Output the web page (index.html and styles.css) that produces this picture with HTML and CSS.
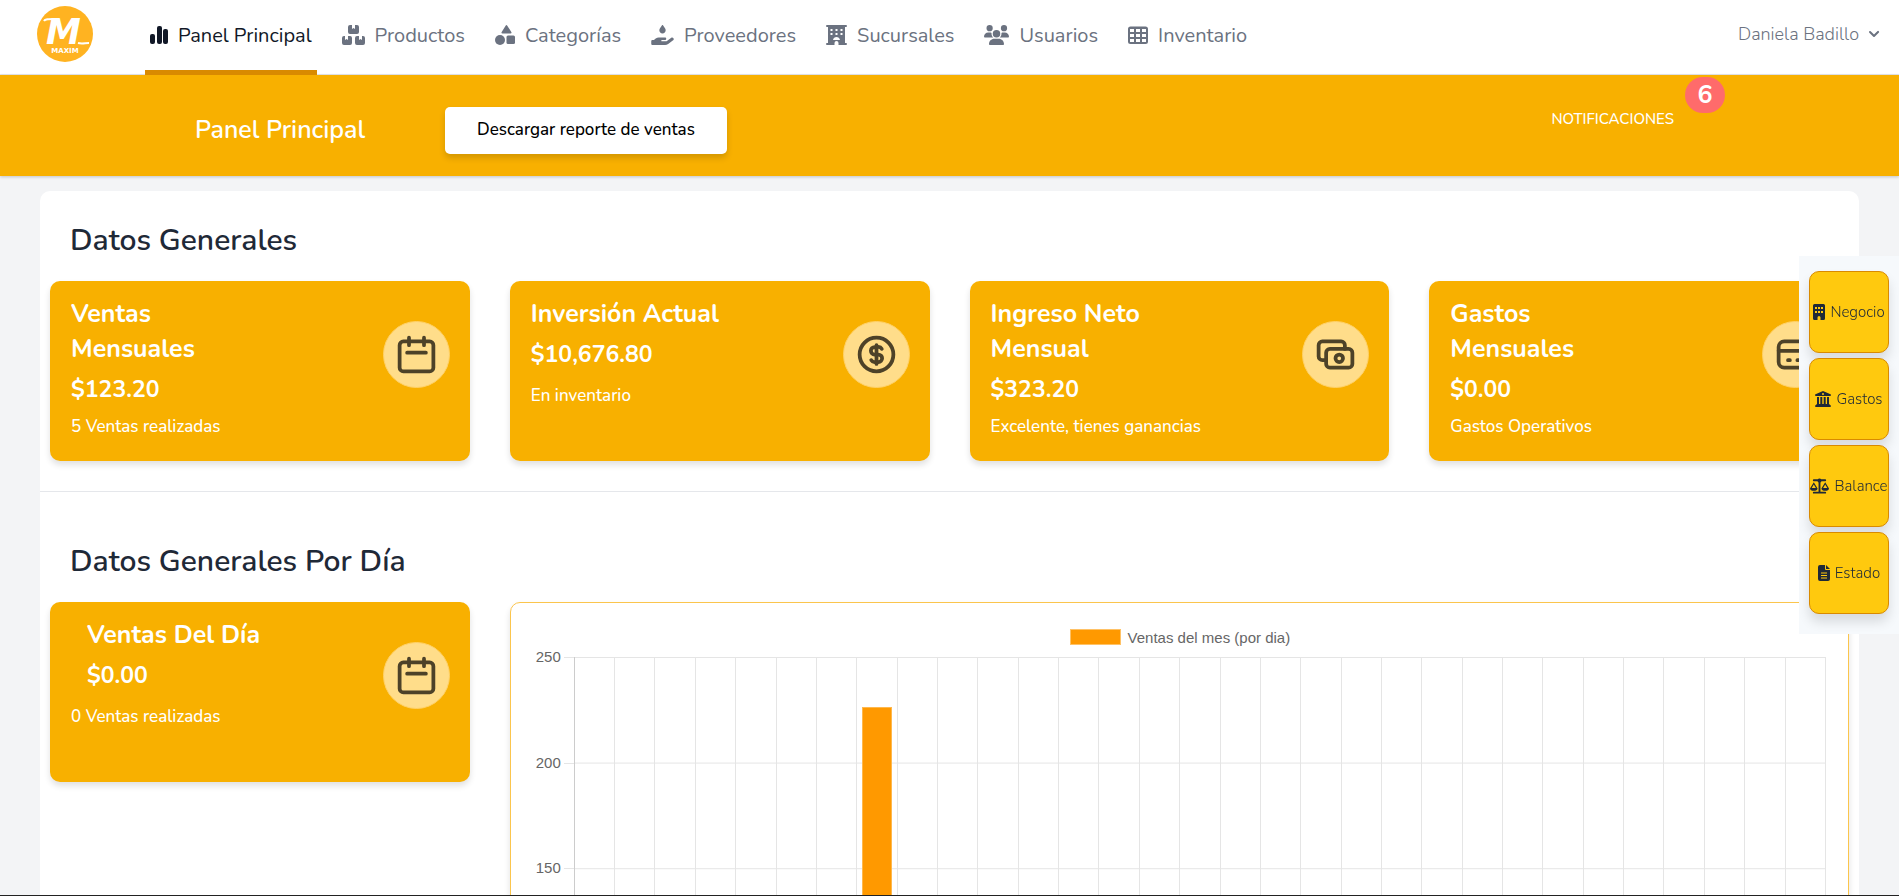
FILE: index.html
```html
<!DOCTYPE html>
<html lang="es">
<head>
    <meta charset="UTF-8">
    <meta name="viewport" content="width=device-width, initial-scale=1">
    <title>Panel Principal</title>
    <link rel="stylesheet" href="styles.css">
</head>
<body>
    <nav class="navbar">
        <a class="logo" href="#" aria-label="Maxim">
            <svg viewBox="0 0 56 56">
                <circle cx="28" cy="28" r="28" fill="#ffb321"/>
                <path d="M7 15c1-2 4-2 11-2M41 37c4 1 7 0 11 0" fill="none" stroke="#fff" stroke-width="2"/>
                <text class="logo-m" x="9" y="38">M</text>
                <text class="logo-name" x="28" y="47" text-anchor="middle">MAXIM</text>
            </svg>
        </a>
        <div class="nav-links">
            <a class="nav-link active" href="#">
                <svg width="18" height="20" viewBox="0 0 18 20">
                    <rect x="0" y="9" width="5" height="10" rx="2"/>
                    <rect x="7" y="1" width="5" height="18" rx="2"/>
                    <rect x="13" y="4" width="5" height="15" rx="2"/>
                </svg>
                Panel Principal
            </a>
            <a class="nav-link" href="#">
                <svg width="23" height="20" viewBox="0 0 23 20">
                    <path d="M8 0h2v4l1.500-1 1.500 1V0h2a2 2 0 0 1 2 2v5a2 2 0 0 1-2 2H8a2 2 0 0 1-2-2V2a2 2 0 0 1 2-2z"/>
                    <path d="M2 11h1v4l1.500-1 1.500 1v-4h2a2 2 0 0 1 2 2v5a2 2 0 0 1-2 2H2a2 2 0 0 1-2-2v-5a2 2 0 0 1 2-2z"/>
                    <path d="M15 11h2v4l1.500-1 1.500 1v-4h1a2 2 0 0 1 2 2v5a2 2 0 0 1-2 2h-6a2 2 0 0 1-2-2v-5a2 2 0 0 1 2-2z"/>
                </svg>
                Productos
            </a>
            <a class="nav-link" href="#">
                <svg width="20" height="20" viewBox="0 0 20 20">
                    <path d="M10.600.700a1 1 0 0 1 1.700 0l4 6.300a1 1 0 0 1-.800 1.500H7.500a1 1 0 0 1-.800-1.500z"/>
                    <circle cx="5" cy="15" r="5"/>
                    <rect x="11.500" y="10.500" width="8.500" height="8.500" rx="1.500"/>
                </svg>
                Categorías
            </a>
            <a class="nav-link" href="#">
                <svg width="23" height="20" viewBox="0 0 576 512">
                    <path d="M275.500 6.600C278.300 2.500 283 0 288 0s9.700 2.500 12.500 6.600L352 85c11.200 16.200 17.200 30 17.200 50v1.700c0 46-36 83-81.200 83s-81.200-37-81.200-83v-1.700c0-19.700 6-34 17.200-50zM568.200 336.300c13.100 17.800 9.300 42.800-8.500 55.900L433.100 485.500c-23.400 17.200-51.600 26.500-80.700 26.500H32c-17.700 0-32-14.300-32-32v-64c0-17.700 14.300-32 32-32h36.800l44.900-36c22.700-18.200 50.900-28 80-28H352c17.700 0 32 14.300 32 32s-14.300 32-32 32h-80c-8.800 0-16 7.200-16 16s7.200 16 16 16h120.600l119.700-88.200c17.800-13.100 42.800-9.300 55.900 8.500z"/>
                </svg>
                Proveedores
            </a>
            <a class="nav-link" href="#">
                <svg width="21" height="20" viewBox="0 0 21 20">
                    <path fill-rule="evenodd" d="M1 0h19a1 1 0 0 1 0 2h-1v16h1a1 1 0 0 1 0 2h-7.500v-2a2 2 0 0 0-4 0v2H1a1 1 0 0 1 0-2h1V2H1a1 1 0 0 1 0-2zM4.500 4v2h2V4zM9.500 4v2h2V4zM14.500 4v2h2V4zM4.500 8v2h2V8zM9.500 8v2h2V8zM14.500 8v2h2V8zM7 15h7c-.300-2-1.800-3-3.500-3S7.300 13 7 15z"/>
                </svg>
                Sucursales
            </a>
            <a class="nav-link" href="#">
                <svg width="25" height="20" viewBox="0 0 640 512">
                    <path d="M144 0a80 80 0 1 1 0 160A80 80 0 1 1 144 0zM512 0a80 80 0 1 1 0 160A80 80 0 1 1 512 0zM0 298.700C0 239.800 47.800 192 106.700 192h42.700c15.900 0 31 3.500 44.600 9.700-1.300 7.200-1.900 14.700-1.900 22.300 0 38.200 16.800 72.500 43.300 96H21.300C9.600 320 0 310.400 0 298.700zM405.300 320h-.700c26.600-23.500 43.300-57.800 43.300-96 0-7.600-.700-15-1.900-22.300 13.600-6.300 28.700-9.700 44.600-9.700h42.700C592.200 192 640 239.800 640 298.700c0 11.800-9.600 21.300-21.300 21.300zM224 224a96 96 0 1 1 192 0 96 96 0 1 1-192 0zM128 485.300C128 411.700 187.700 352 261.300 352h117.300C452.300 352 512 411.700 512 485.300c0 14.700-11.900 26.700-26.700 26.700H154.700c-14.700 0-26.700-11.900-26.700-26.700z"/>
                </svg>
                Usuarios
            </a>
            <a class="nav-link" href="#">
                <svg width="20" height="20" viewBox="0 0 20 20">
                    <path fill-rule="evenodd" d="M2.500 1.500h15A2.500 2.500 0 0 1 20 4v12.500a2.500 2.500 0 0 1-2.500 2.500h-15A2.500 2.500 0 0 1 0 16.500V4a2.500 2.500 0 0 1 2.500-2.500zM2 4v3h4V4zM8 4v3h4V4zM14 4v3h4V4zM2 9v3h4V9zM8 9v3h4V9zM14 9v3h4V9zM2 14v3h4v-3zM8 14v3h4v-3zM14 14v3h4v-3z"/>
                </svg>
                Inventario
            </a>
        </div>
        <button class="user-menu" type="button">
            Daniela Badillo
            <svg width="20" height="20" viewBox="0 0 20 20">
                <path fill-rule="evenodd" d="M5.300 7.300a1 1 0 0 1 1.400 0L10 10.600l3.300-3.300a1 1 0 1 1 1.400 1.400l-4 4a1 1 0 0 1-1.400 0l-4-4a1 1 0 0 1 0-1.400z"/>
            </svg>
        </button>
    </nav>

    <header class="page-header">
        <h1>Panel Principal</h1>
        <button class="download" type="button">Descargar reporte de ventas</button>
        <a class="notifications" href="#">NOTIFICACIONES <span class="badge">6</span></a>
    </header>

    <main class="panel">
        <section class="section">
            <h2>Datos Generales</h2>
            <div class="cards">
                <article class="card">
                    <div class="card-text">
                        <h3>Ventas Mensuales</h3>
                        <p class="amount">$123.20</p>
                        <p class="detail">5 Ventas realizadas</p>
                    </div>
                    <span class="card-icon">
                        <svg viewBox="0 0 24 24">
                            <rect x="3" y="5" width="18" height="16" rx="2"/>
                            <path d="M8 3v4M16 3v4M7 11h10"/>
                        </svg>
                    </span>
                </article>
                <article class="card short">
                    <div class="card-text">
                        <h3>Inversión Actual</h3>
                        <p class="amount">$10,676.80</p>
                        <p class="detail">En inventario</p>
                    </div>
                    <span class="card-icon">
                        <svg viewBox="0 0 24 24">
                            <circle cx="12" cy="12" r="9"/>
                            <path d="M14.800 9A2 2 0 0 0 13 8h-2a2 2 0 1 0 0 4h2a2 2 0 1 1 0 4h-2a2 2 0 0 1-1.800-1M12 7v10"/>
                        </svg>
                    </span>
                </article>
                <article class="card">
                    <div class="card-text">
                        <h3>Ingreso Neto Mensual</h3>
                        <p class="amount">$323.20</p>
                        <p class="detail">Excelente, tienes ganancias</p>
                    </div>
                    <span class="card-icon">
                        <svg viewBox="0 0 24 24">
                            <rect x="7" y="9" width="14" height="10" rx="2"/>
                            <circle cx="14" cy="14" r="2"/>
                            <path d="M17 9V7a2 2 0 0 0-2-2H5a2 2 0 0 0-2 2v6a2 2 0 0 0 2 2h2"/>
                        </svg>
                    </span>
                </article>
                <article class="card">
                    <div class="card-text">
                        <h3>Gastos Mensuales</h3>
                        <p class="amount">$0.00</p>
                        <p class="detail">Gastos Operativos</p>
                    </div>
                    <span class="card-icon">
                        <svg viewBox="0 0 24 24">
                            <rect x="3" y="5" width="18" height="14" rx="3"/>
                            <path d="M3 10h18M8 15h1M13 15h1"/>
                        </svg>
                    </span>
                </article>
            </div>
        </section>

        <section class="section">
            <h2>Datos Generales Por Día</h2>
            <div class="cards">
                <article class="card short day">
                    <div class="card-text">
                        <h3>Ventas Del Día</h3>
                        <p class="amount">$0.00</p>
                        <p class="detail">0 Ventas realizadas</p>
                    </div>
                    <span class="card-icon">
                        <svg viewBox="0 0 24 24">
                            <rect x="3" y="5" width="18" height="16" rx="2"/>
                            <path d="M8 3v4M16 3v4M7 11h10"/>
                        </svg>
                    </span>
                </article>
                <div class="chart">
                    <div class="legend"><span class="swatch"></span>Ventas del mes (por dia)</div>
                    <div class="chart-body">
                        <div class="scale">
                            <span>250</span>
                            <span>200</span>
                            <span>150</span>
                            <span>100</span>
                            <span>50</span>
                        </div>
                        <div class="plot" id="plot"></div>
                    </div>
                </div>
            </div>
        </section>
    </main>

    <aside class="shortcuts">
        <a href="#">
            <svg width="12" height="16" viewBox="0 0 12 16">
                <path fill-rule="evenodd" d="M1.500 0h9A1.500 1.500 0 0 1 12 1.500v13a1.500 1.500 0 0 1-1.500 1.500h-3v-2.500a1.500 1.500 0 0 0-3 0V16h-3A1.500 1.500 0 0 1 0 14.500v-13A1.500 1.500 0 0 1 1.500 0zM2 3v2h2V3zM5 3v2h2V3zM8 3v2h2V3zM2 7v2h2V7zM5 7v2h2V7zM8 7v2h2V7z"/>
            </svg>
            Negocio
        </a>
        <a href="#">
            <svg width="16" height="16" viewBox="0 0 16 16">
                <path fill-rule="evenodd" d="M8 0l7.500 3.200c.800.500.500 1.800-.500 1.800H1C0 5-.300 3.700.500 3.200zM8 2a1 1 0 1 0 0 2 1 1 0 0 0 0-2zM2 6h2v7h1.300V6h2v7h1.400V6h2v7H12V6h2v7l1.500 1.300c.800.700.500 1.700-.500 1.700H1c-1 0-1.300-1-.500-1.700L2 13z"/>
            </svg>
            Gastos
        </a>
        <a href="#">
            <svg width="19" height="16" viewBox="0 0 20 16">
                <path fill-rule="evenodd" d="M10 0a2 2 0 0 1 1.800 1H16a1 1 0 0 1 0 2h-4a2 2 0 0 1-1 1.300V14h5a1 1 0 0 1 0 2H4a1 1 0 0 1 0-2h5V4.300A2 2 0 0 1 8 3H4a1 1 0 0 1 0-2h4.200A2 2 0 0 1 10 0zM4 4l4 6.500c0 1.500-1.800 2.500-4 2.500s-4-1-4-2.500zM4 6.500L1.800 10h4.400zM16 4l4 6.500c0 1.500-1.800 2.500-4 2.500s-4-1-4-2.500zM16 6.500L13.800 10h4.400z"/>
            </svg>
            Balance
        </a>
        <a href="#">
            <svg width="12" height="16" viewBox="0 0 12 16">
                <path fill-rule="evenodd" d="M2 0h5v4a1 1 0 0 0 1 1h4v9a2 2 0 0 1-2 2H2a2 2 0 0 1-2-2V2a2 2 0 0 1 2-2zM8 0l4 4H8zM3 7.500v1h6v-1zM3 10v1h6v-1zM3 12.500v1h6v-1z"/>
            </svg>
            Estado
        </a>
    </aside>

    <div class="bottom-edge"></div>

    <script>
        const maxValue = 250;
        const salesByDay = new Array(31).fill(0);
        salesByDay[7] = 226.4;

        const plot = document.getElementById('plot');
        salesByDay.forEach(value => {
            const day = document.createElement('div');
            day.className = 'plot-day';
            if (value > 0) {
                const bar = document.createElement('div');
                bar.className = 'bar';
                bar.style.height = (value / maxValue * 100) + '%';
                day.appendChild(bar);
            }
            plot.appendChild(day);
        });
    </script>
</body>
</html>
```
FILE: styles.css
```css
* {
    box-sizing: border-box;
}

body {
    margin: 0;
    background-color: #f3f4f6;
    color: #1f2937;
    font-family: Nunito, Lato, sans-serif;
    font-size: 18px;
}

a {
    color: inherit;
    text-decoration: none;
}

button {
    border: none;
    font-family: inherit;
    cursor: pointer;
}

h1, h2, h3, p {
    margin: 0;
}

svg {
    fill: currentColor;
    flex-shrink: 0;
}

.navbar {
    display: flex;
    height: 75px;
    padding: 0 15px 0 37px;
    background-color: #fff;
    border-bottom: 1px solid #e5e7eb;
}

.logo {
    width: 56px;
    margin: 6px 52px 0 0;
}

.logo svg {
    display: block;
    width: 56px;
    height: 56px;
}

.logo-m {
    fill: #fff;
    font-family: "DejaVu Sans", sans-serif;
    font-size: 35px;
    font-weight: 700;
    font-style: italic;
}

.logo-name {
    fill: #fff;
    font-family: "DejaVu Sans", sans-serif;
    font-size: 7px;
    font-weight: 700;
}

.nav-links {
    display: flex;
    gap: 20px;
    flex-grow: 1;
    margin-bottom: -1px;
}

.nav-link {
    display: flex;
    align-items: center;
    gap: 10px;
    padding: 0 5px;
    border-bottom: 5px solid transparent;
    color: #6b7280;
    font-size: 20px;
    font-weight: 370;
    white-space: nowrap;
}

.nav-link.active {
    color: #111827;
    border-bottom-color: #d98a00;
}

.user-menu {
    display: flex;
    align-items: center;
    gap: 5px;
    padding: 0 0 6px;
    background: none;
    color: #6b7280;
    font-size: 18px;
    font-weight: 300;
}

.page-header {
    display: flex;
    align-items: center;
    padding: 0 174px 0 195px;
    min-height: 101px;
    background-color: #f8b000;
    box-shadow: 0 1px 3px rgba(0, 0, 0, 0.2);
    color: #fff;
}

.page-header h1 {
    width: 250px;
    margin-top: 8px;
    font-size: 25px;
    font-weight: 600;
}

.download {
    height: 47px;
    margin-top: 10px;
    padding: 0 32px 3px;
    border-radius: 5px;
    background-color: #fff;
    box-shadow: 0 4px 6px rgba(0, 0, 0, 0.15);
    color: #000;
    font-size: 17px;
    font-weight: 500;
}

.notifications {
    position: relative;
    margin: 0 51px 14px auto;
    font-size: 15px;
    font-weight: 500;
}

.badge {
    position: absolute;
    left: 100%;
    bottom: 16px;
    width: 40px;
    margin-left: 11px;
    border-radius: 18px;
    background-color: #ff6b6b;
    font-size: 25px;
    font-weight: 700;
    line-height: 36px;
    text-align: center;
}

.panel {
    margin: 15px 40px 0;
    background-color: #fff;
    border-radius: 10px;
}

.section {
    padding: 30px 10px;
}

.section + .section {
    padding-top: 50px;
    border-top: 1px solid #e5e7eb;
}

.section h2 {
    margin: 0 20px 20px;
    font-size: 30px;
    font-weight: 650;
    line-height: 40px;
}

.cards {
    display: grid;
    grid-template-columns: repeat(4, 1fr);
    align-items: start;
    gap: 40px;
}

.card {
    display: flex;
    justify-content: space-between;
    min-height: 180px;
    padding: 16px 20px 13px 21px;
    border-radius: 10px;
    background-color: #f8b000;
    box-shadow: 0 4px 6px rgba(0, 0, 0, 0.12);
    color: #fff;
}

.card h3 {
    max-width: 195px;
    font-size: 25px;
    font-weight: 700;
    line-height: 35px;
}

.amount {
    margin-top: 5px;
    font-size: 23px;
    font-weight: 700;
    line-height: 36px;
}

.detail {
    margin-top: 5px;
    font-size: 17px;
    font-weight: 500;
    line-height: 28px;
}

.short .detail {
    margin-top: 9px;
}

.day h3,
.day .amount {
    margin-left: 16px;
}

.card-icon {
    display: flex;
    align-items: center;
    justify-content: center;
    width: 67px;
    height: 67px;
    margin-top: 24px;
    border: 1px solid #ffd166;
    border-radius: 50%;
    background-color: #ffdd8a;
    color: #4d4228;
}

.card-icon svg {
    width: 45px;
    height: 45px;
    fill: none;
    stroke: currentColor;
    stroke-width: 2;
    stroke-linecap: round;
    stroke-linejoin: round;
}

.chart {
    grid-column: span 3;
    padding: 18px 22px 18px 23px;
    border: 1px solid #fbc54d;
    border-radius: 10px;
    box-shadow: 0 4px 6px rgba(0, 0, 0, 0.12);
    color: #666;
    font-family: "Liberation Sans", Arial, sans-serif;
    font-size: 15px;
}

.legend {
    display: flex;
    align-items: center;
    justify-content: center;
    gap: 7px;
    height: 32px;
    margin-bottom: 4px;
}

.swatch {
    width: 51px;
    height: 16px;
    border: 1px solid #ffc266;
    background-color: #ff9900;
}

.chart-body {
    display: flex;
    height: 528px;
}

.scale {
    display: flex;
    flex-direction: column;
    width: 40px;
}

.scale span {
    flex: 1;
    padding-right: 13px;
    background: linear-gradient(#e5e5e5, #e5e5e5) top right / 10px 1px no-repeat;
    line-height: 0;
    text-align: right;
}

.plot {
    display: flex;
    flex-grow: 1;
    border-left: 1px solid #ccc;
    background: linear-gradient(#e5e5e5 1px, transparent 1px) top / 100% 20%;
}

.plot-day {
    display: flex;
    align-items: flex-end;
    justify-content: center;
    flex: 1;
    border-right: 1px solid #e5e5e5;
}

.bar {
    width: 75%;
    border: 1px solid #ffb84d;
    background-color: #ff9900;
}

.shortcuts {
    position: fixed;
    top: 256px;
    right: 0;
    display: flex;
    flex-direction: column;
    gap: 5px;
    width: 100px;
    padding: 15px 10px 20px;
    background-color: #f6f9fc;
}

.shortcuts a {
    display: flex;
    align-items: center;
    justify-content: center;
    gap: 5px;
    height: 82px;
    border: 1px solid #d98a00;
    border-radius: 10px;
    background-color: #ffc90e;
    box-shadow: 0 8px 12px rgba(0, 0, 0, 0.12);
    font-size: 15px;
    font-weight: 300;
}

.bottom-edge {
    position: fixed;
    right: 0;
    bottom: 0;
    left: 0;
    height: 1px;
    background-color: #222;
}
```
